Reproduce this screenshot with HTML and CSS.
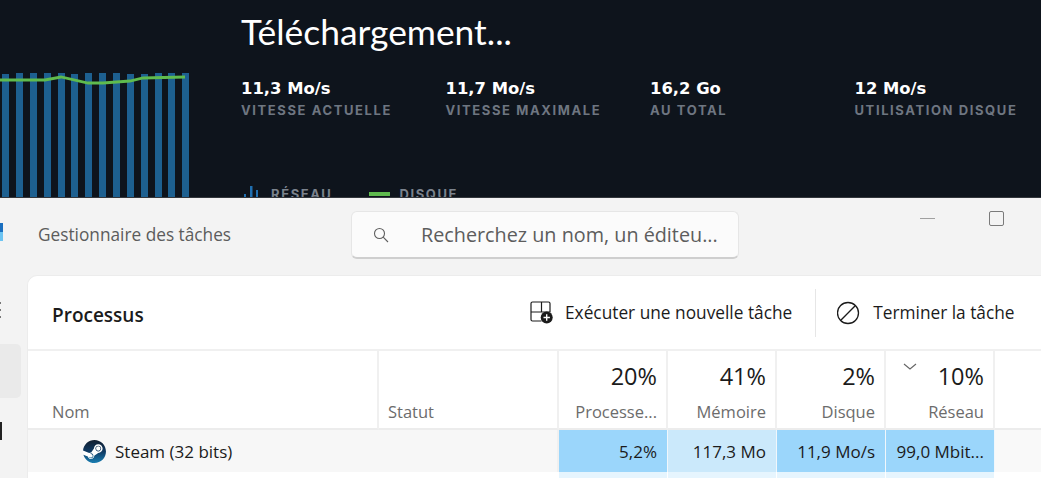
FILE: index.html
```html
<!DOCTYPE html>
<html lang="fr">
<head>
    <meta charset="UTF-8">
    <meta name="viewport" content="width=device-width, initial-scale=1.0">
    <title>Téléchargement</title>
    <link rel="stylesheet" href="styles.css">
</head>
<body>
    <section class="steam-panel">
        <svg class="steam-chart" width="190" height="124" viewBox="0 0 190 124">
            <g fill="#1d6090">
                <rect x="2" y="1" width="7" height="123"/><rect x="16" y="0" width="7" height="124"/>
                <rect x="30" y="0" width="7" height="124"/><rect x="44" y="0" width="7" height="124"/>
                <rect x="58" y="0" width="7" height="124"/><rect x="71" y="1" width="7" height="123"/>
                <rect x="85" y="0" width="7" height="124"/><rect x="99" y="0" width="7" height="124"/>
                <rect x="113" y="0" width="7" height="124"/><rect x="127" y="1" width="7" height="123"/>
                <rect x="141" y="1" width="7" height="123"/><rect x="155" y="0" width="7" height="124"/>
                <rect x="168" y="0" width="7" height="124"/><rect x="182" y="0" width="7" height="124"/>
            </g>
            <polyline points="0,7 45,7 61,4 88,10 103,10 130,8 143,5 185,4" fill="none" stroke="#5fbb4e" stroke-width="2.8"/>
        </svg>
        <div class="steam-info">
            <h1 class="steam-title">Téléchargement...</h1>
            <div class="stat-row">
                <div class="stat"><div class="stat-value">11,3 Mo/s</div><div class="stat-label">VITESSE ACTUELLE</div></div>
                <div class="stat"><div class="stat-value">11,7 Mo/s</div><div class="stat-label">VITESSE MAXIMALE</div></div>
                <div class="stat"><div class="stat-value">16,2 Go</div><div class="stat-label">AU TOTAL</div></div>
                <div class="stat"><div class="stat-value">12 Mo/s</div><div class="stat-label">UTILISATION DISQUE</div></div>
            </div>
            <div class="legend">
                <span class="legend-item">
                    <svg class="legend-icon" width="14" height="16" viewBox="0 0 14 16"><g fill="#1f6fb0"><rect x="0" y="8" width="2" height="8"/><rect x="6" y="0" width="2.500" height="16"/><rect x="12" y="4" width="2" height="12"/></g></svg>
                    RÉSEAU
                </span>
                <span class="legend-item">
                    <span class="legend-line"></span>
                    DISQUE
                </span>
            </div>
        </div>
    </section>

    <section class="taskmgr">
        <header class="titlebar">
            <span class="nav-logo"></span>
            <div class="app-name">Gestionnaire des tâches</div>
            <div class="search-box">
                <svg width="16" height="16" viewBox="0 0 16 16" fill="none" stroke="#5f5f5f" stroke-width="1.1"><circle cx="6.5" cy="6.5" r="5"/><path d="M10.2 10.2 15 15"/></svg>
                <span class="search-text">Recherchez un nom, un éditeu...</span>
            </div>
            <div class="win-controls">
                <span class="win-min"></span>
                <span class="win-max"></span>
            </div>
        </header>
        <div class="tm-body">
            <nav class="sidebar">
                <span class="nav-lines"></span>
                <span class="nav-active"></span>
                <span class="nav-dark"></span>
            </nav>
            <main class="card">
                <div class="toolbar">
                    <h2 class="toolbar-title">Processus</h2>
                    <button class="tool-btn">
                        <svg width="24" height="24" viewBox="0 0 24 24" fill="none" stroke="#1b1b1b" stroke-width="1.2"><path d="M12.500 20H3.500A1.500 1.500 0 0 1 2 18.500V2.500A1.500 1.500 0 0 1 3.500 1h16A1.500 1.500 0 0 1 21 2.500V11H2M12.500 1v10"/><circle cx="17.700" cy="16.500" r="6" fill="#1b1b1b" stroke="none"/><path d="M17.700 13.300v6.400M14.500 16.500h6.400" stroke="#fff" stroke-width="1.400"/></svg>
                        Exécuter une nouvelle tâche
                    </button>
                    <span class="tool-sep"></span>
                    <button class="tool-btn">
                        <svg width="24" height="24" viewBox="0 0 24 24" fill="none" stroke="#1b1b1b" stroke-width="1.300"><circle cx="11" cy="12" r="10.500"/><path d="M3.800 19.200 18.200 4.800"/></svg>
                        Terminer la tâche
                    </button>
                </div>
                <div class="proc-table">
                    <div class="th th-name"><span class="th-label">Nom</span></div>
                    <div class="th th-status"><span class="th-label">Statut</span></div>
                    <div class="th th-num"><span class="th-pct">20%</span><span class="th-label">Processe...</span></div>
                    <div class="th th-num"><span class="th-pct">41%</span><span class="th-label">Mémoire</span></div>
                    <div class="th th-num"><span class="th-pct">2%</span><span class="th-label">Disque</span></div>
                    <div class="th th-num th-sorted">
                        <svg class="sort-icon" width="14" height="7" viewBox="0 0 14 7" fill="none" stroke="#666" stroke-width="1.100"><path d="M1 1l6 5 6-5"/></svg>
                        <span class="th-pct">10%</span><span class="th-label">Réseau</span>
                    </div>
                    <div class="th th-rest"></div>

                    <div class="td td-name">
                        <svg class="steam-logo" width="23" height="23" viewBox="0 0 24 24">
                            <defs>
                                <linearGradient id="steamFill" x1="0" y1="0" x2="0" y2="1">
                                    <stop offset="0" stop-color="#111d2e"/>
                                    <stop offset="0.5" stop-color="#0f3a63"/>
                                    <stop offset="1" stop-color="#1a7fb3"/>
                                </linearGradient>
                            </defs>
                            <circle cx="12" cy="12" r="11.900" fill="#fff"/>
                            <path fill="url(#steamFill)" d="M11.979 0C5.678 0 .511 4.86.022 11.037l6.432 2.658c.545-.371 1.203-.59 1.912-.59.063 0 .125.004.188.006l2.861-4.142V8.91c0-2.495 2.028-4.524 4.524-4.524 2.494 0 4.524 2.031 4.524 4.527s-2.03 4.525-4.524 4.525h-.105l-4.076 2.911c0 .052.004.105.004.159 0 1.875-1.515 3.396-3.39 3.396-1.635 0-3.016-1.173-3.331-2.727L.436 15.27C1.862 20.307 6.486 24 11.979 24c6.627 0 11.999-5.373 11.999-12S18.605 0 11.979 0zM7.54 18.21l-1.473-.61c.262.543.714.999 1.314 1.25 1.297.539 2.793-.076 3.332-1.375.263-.63.264-1.319.005-1.949s-.75-1.121-1.377-1.383c-.624-.26-1.29-.249-1.878-.03l1.523.63c.956.4 1.409 1.5 1.009 2.455-.397.957-1.497 1.41-2.454 1.012H7.54zm11.415-9.303c0-1.662-1.353-3.015-3.015-3.015-1.665 0-3.015 1.353-3.015 3.015 0 1.665 1.35 3.015 3.015 3.015 1.663 0 3.015-1.35 3.015-3.015zm-5.273-.005c0-1.252 1.013-2.266 2.265-2.266 1.249 0 2.266 1.014 2.266 2.266 0 1.251-1.017 2.265-2.266 2.265-1.253 0-2.265-1.014-2.265-2.265z"/>
                        </svg>
                        Steam (32 bits)
                    </div>
                    <div class="td td-status"></div>
                    <div class="td td-num heat-strong">5,2%</div>
                    <div class="td td-num heat-light">117,3 Mo</div>
                    <div class="td td-num heat-strong">11,9 Mo/s</div>
                    <div class="td td-num heat-strong">99,0 Mbit...</div>
                    <div class="td td-rest"></div>

                    <div class="td-next"></div>
                    <div class="td-next"></div>
                    <div class="td-next next-tint"></div>
                    <div class="td-next next-tint"></div>
                    <div class="td-next next-tint"></div>
                    <div class="td-next next-tint"></div>
                    <div class="td-next"></div>
                </div>
            </main>
        </div>
    </section>
</body>
</html>
```

FILE: styles.css
```css
* {
    margin: 0;
    padding: 0;
    box-sizing: border-box;
}

body {
    width: 1041px;
    height: 478px;
    overflow: hidden;
    font-family: "Open Sans", "Noto Sans", sans-serif;
    background: #f3f3f3;
}

/* steam download panel */
.steam-panel {
    height: 198px;
    background: #0e141c;
    display: flex;
    overflow: hidden;
    border-bottom: 1px solid #33373c;
}

.steam-chart {
    flex: none;
    margin-top: 73px;
}

.steam-info {
    margin-left: 51px;
    padding-top: 9px;
    color: white;
}

.steam-title {
    font-family: "Lato", sans-serif;
    font-size: 35.400px;
    font-weight: 400;
    line-height: 46px;
}

.stat-row {
    display: flex;
    margin-top: 23px;
}

.stat {
    width: 204.500px;
    flex: none;
}

.stat-value {
    font-family: "DejaVu Sans", sans-serif;
    font-size: 16.400px;
    font-weight: 700;
    line-height: 22px;
}

.stat-label {
    font-family: "Inter", sans-serif;
    font-size: 13px;
    font-weight: 700;
    letter-spacing: 1.600px;
    line-height: 20px;
    color: #6e7681;
    white-space: nowrap;
}

.legend {
    display: flex;
    gap: 37px;
    margin-top: 64px;
}

.legend-item {
    display: flex;
    align-items: center;
    gap: 13px;
    font-family: "Inter", sans-serif;
    font-size: 13px;
    font-weight: 700;
    letter-spacing: 1.600px;
    color: #7b838d;
    line-height: 20px;
}

.legend-icon {
    margin-left: 3px;
}

.legend-line {
    width: 21px;
    height: 4px;
    margin-right: -4px;
    background: #5fbb4e;
}

/* task manager */
.taskmgr {
    height: 280px;
    background: #f3f3f3;
}

.titlebar {
    height: 77px;
    display: flex;
    position: relative;
    padding-left: 38px;
    padding-top: 13px;
}

.nav-logo {
    position: absolute;
    left: 0;
    top: 25px;
    width: 3px;
    height: 18px;
    background: linear-gradient(#1a6fc0 50%, #6cc4f2 50%);
}

.app-name {
    width: 313px;
    font-size: 17.250px;
    line-height: 48px;
    color: #5c5c5c;
    white-space: nowrap;
}

.search-box {
    width: 388px;
    height: 48px;
    display: flex;
    align-items: center;
    gap: 32px;
    padding-left: 21px;
    background: #fbfbfb;
    border: 1px solid #e6e6e6;
    border-bottom: 2px solid #cfcfcf;
    border-radius: 6px;
}

.search-text {
    font-size: 19.800px;
    color: #5d5d5d;
    white-space: nowrap;
}

.win-controls {
    display: flex;
    align-items: center;
    gap: 54px;
    margin-left: 181px;
    height: 15px;
}

.win-min {
    width: 15px;
    height: 1px;
    background: #a0a0a0;
}

.win-max {
    width: 15px;
    height: 15px;
    border: 1px solid #7a7a7a;
    border-radius: 2px;
}

.tm-body {
    display: flex;
    height: 203px;
}

.sidebar {
    width: 27px;
    flex: none;
    position: relative;
}

.nav-lines {
    position: absolute;
    left: 0;
    top: 27px;
    width: 1px;
    height: 16px;
    background: repeating-linear-gradient(#777 0 2px, transparent 2px 7px);
}

.nav-active {
    position: absolute;
    left: 0;
    top: 69px;
    width: 21px;
    height: 54px;
    background: #eaeaea;
    border-radius: 0 5px 5px 0;
}

.nav-dark {
    position: absolute;
    left: 0;
    top: 147px;
    width: 2px;
    height: 18px;
    background: #222;
}

.card {
    flex: 1;
    background: white;
    border: 1px solid #ececec;
    border-right: none;
    border-bottom: none;
    border-top-left-radius: 10px;
    overflow: hidden;
}

.toolbar {
    height: 75px;
    display: flex;
    align-items: center;
    padding-left: 24px;
    border-bottom: 2px solid #f0f0f0;
}

.toolbar-title {
    width: 477px;
    padding-top: 4px;
    font-size: 19px;
    font-weight: 600;
    color: #1b1b1b;
}

.tool-btn {
    display: flex;
    align-items: center;
    gap: 12px;
    background: transparent;
    border: none;
    font-family: inherit;
    font-size: 17.300px;
    color: #1b1b1b;
    white-space: nowrap;
}

.tool-sep {
    width: 1px;
    height: 48px;
    background: #e6e6e6;
    margin: 0 21px 0 23px;
}

.proc-table {
    display: grid;
    grid-template-columns: 351px 180px 109px 109px 109px 109px 1fr;
    grid-template-rows: 79px 42px 6px;
}

.th {
    position: relative;
    display: flex;
    flex-direction: column;
    justify-content: flex-end;
    border-right: 2px solid #f0f0f0;
    border-bottom: 2px solid #ececec;
    padding-bottom: 3px;
}

.th-rest {
    border-right: none;
}

.th-name .th-label {
    padding-left: 24px;
}

.th-status .th-label {
    padding-left: 9px;
}

.th-label {
    font-size: 16.500px;
    line-height: 26px;
    color: #6c6c6c;
    white-space: nowrap;
}

.th-num {
    align-items: flex-end;
    padding-right: 9px;
}

.th-pct {
    font-size: 23.500px;
    line-height: 36px;
    margin-bottom: 5px;
    color: #1b1b1b;
}

.sort-icon {
    position: absolute;
    left: 17px;
    top: 12px;
}

.td {
    font-size: 17px;
    color: #1b1b1b;
    background: #f7f7f7;
    display: flex;
    align-items: center;
}

.td-name {
    padding-left: 55px;
    gap: 9px;
}

.td-status {
    border-right: 2px solid #f0f0f0;
}

.td-num {
    justify-content: flex-end;
    padding-right: 10px;
    border-right: 1px solid #f0f7fc;
    white-space: nowrap;
}

.heat-strong {
    background: #9bd6fb;
}

.heat-light {
    background: #cbe9fb;
}

.td-rest {
    background: #f9f9f9;
}

.next-tint {
    background: #e6f5fe;
    border-right: 1px solid #fff;
}
```
